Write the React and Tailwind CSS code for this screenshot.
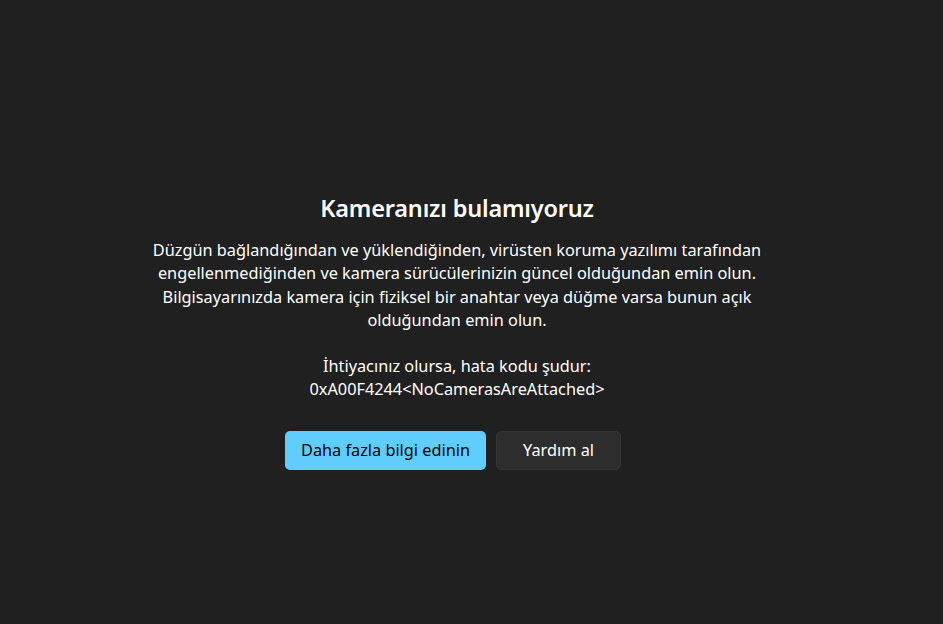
export default function App() {
  return (
    <div
      className="w-full h-[624px] bg-[#202020] text-white flex flex-col items-center pt-[191px] pr-[29px]"
      style={{ fontFamily: '"Noto Sans", "Open Sans", sans-serif' }}
    >
      <h1 className="text-[23.5px] font-semibold leading-[34px] tracking-[-0.2px]">Kameranızı bulamıyoruz</h1>
      <div className="mt-[14px] text-[16.3px] leading-[23.3px] text-center w-[660px]">
        <p>
          Düzgün bağlandığından ve yüklendiğinden, virüsten koruma yazılımı tarafından
          <br />
          engellenmediğinden ve kamera sürücülerinizin güncel olduğundan emin olun.
          <br />
          Bilgisayarınızda kamera için fiziksel bir anahtar veya düğme varsa bunun açık
          <br />
          olduğundan emin olun.
        </p>
        <p className="mt-[23px]">
          İhtiyacınız olursa, hata kodu şudur:
          <br />
          0xA00F4244&lt;NoCamerasAreAttached&gt;
        </p>
      </div>
      <div className="mt-[29px] flex gap-[10px] pr-[8px]">
        <button className="h-[39px] w-[201px] rounded-[5px] bg-[#60cdff] text-[#000000] text-[16.3px]">
          Daha fazla bilgi edinin
        </button>
        <button className="h-[39px] w-[125px] rounded-[5px] bg-[#2d2d2d] border border-[#353535] text-white text-[16.3px]">
          Yardım al
        </button>
      </div>
    </div>
  );
}
